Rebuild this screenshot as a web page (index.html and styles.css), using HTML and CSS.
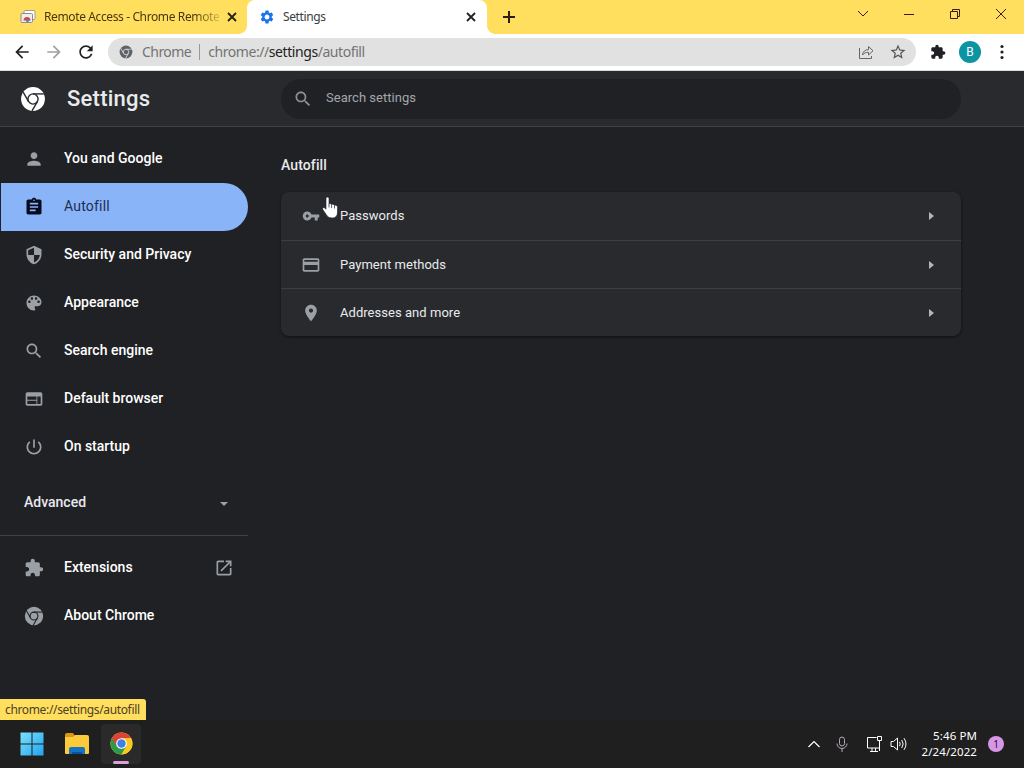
FILE: index.html
```html
<!DOCTYPE html>
<html lang="en">
<head>
    <meta charset="UTF-8">
    <title>Settings</title>
    <meta name="viewport" content="width=device-width, initial-scale=1.0">
    <link rel="stylesheet" href="styles.css">
</head>
<body>
<svg class="defs">
    <symbol id="i-chrome" viewBox="0 0 24 24">
        <circle cx="12" cy="12" r="11" fill="currentColor"/>
        <g fill="none" stroke="var(--cut)" stroke-width="1.3">
            <circle cx="12" cy="12" r="4.7"/>
            <path d="M12 7.3h10"/>
            <path d="M12 7.3h10" transform="rotate(120 12 12)"/>
            <path d="M12 7.3h10" transform="rotate(240 12 12)"/>
        </g>
    </symbol>
    <symbol id="i-search" viewBox="0 0 24 24"><path d="M15.5 14h-.79l-.28-.27C15.41 12.59 16 11.11 16 9.5 16 5.91 13.09 3 9.5 3S3 5.91 3 9.5 5.91 16 9.5 16c1.61 0 3.09-.59 4.23-1.57l.27.28v.79l5 4.99L20.49 19l-4.99-5zm-6 0C7.01 14 5 11.99 5 9.5S7.01 5 9.5 5 14 7.01 14 9.5 11.99 14 9.5 14z"/></symbol>
    <symbol id="i-ext" viewBox="0 0 24 24"><path d="M20.5 11H19V7c0-1.1-.9-2-2-2h-4V3.5C13 2.12 11.88 1 10.5 1S8 2.12 8 3.5V5H4c-1.1 0-1.99.9-1.99 2v3.8H3.5c1.49 0 2.7 1.21 2.7 2.7s-1.21 2.7-2.7 2.7H2V20c0 1.1.9 2 2 2h3.8v-1.5c0-1.49 1.21-2.7 2.7-2.7 1.49 0 2.7 1.21 2.7 2.7V22H17c1.1 0 2-.9 2-2v-4h1.5c1.38 0 2.5-1.12 2.5-2.5S21.88 11 20.5 11z"/></symbol>
    <symbol id="i-back" viewBox="0 0 24 24"><path d="M20 11H7.83l5.59-5.59L12 4l-8 8 8 8 1.41-1.41L7.83 13H20v-2z"/></symbol>
    <symbol id="i-close" viewBox="0 0 10 10"><path d="M1 1l8 8M9 1l-8 8" fill="none" stroke="currentColor" stroke-width="1.8"/></symbol>
</svg>

<div class="tabstrip">
    <div class="tab">
        <svg class="favicon" viewBox="0 0 16 16">
            <rect x="4" y="1.5" width="11" height="9" rx="1" fill="#fff" stroke="#a79a8c"/>
            <rect x="1" y="4.5" width="11.5" height="9" rx="1" fill="#eee" stroke="#8d8b90"/>
            <path d="M3.5 11.500a3.500 3.500 0 0 1 7 0z" fill="#d8453a"/>
            <circle cx="7.5" cy="11.5" r="1.6" fill="#4a80d8"/>
        </svg>
        <span class="tab-title faded">Remote Access - Chrome Remote</span>
        <svg class="tab-close"><use href="#i-close"/></svg>
    </div>
    <div class="tab active">
        <svg class="favicon gear" viewBox="0 0 24 24"><path d="M19.14 12.94c.04-.3.06-.61.06-.94 0-.32-.02-.64-.07-.94l2.03-1.58c.18-.14.23-.41.12-.61l-1.92-3.32c-.12-.22-.37-.29-.59-.22l-2.39.96c-.5-.38-1.03-.7-1.62-.94l-.36-2.54c-.04-.24-.24-.41-.48-.41h-3.84c-.24 0-.43.17-.47.41l-.36 2.54c-.59.24-1.13.57-1.62.94l-2.39-.96c-.22-.08-.47 0-.59.22L2.74 8.87c-.12.21-.08.47.12.61l2.03 1.58c-.05.3-.09.63-.09.94s.02.64.07.94l-2.03 1.58c-.18.14-.23.41-.12.61l1.92 3.32c.12.22.37.29.59.22l2.39-.96c.5.38 1.03.7 1.62.94l.36 2.54c.05.24.24.41.48.41h3.84c.24 0 .44-.17.47-.41l.36-2.54c.59-.24 1.13-.56 1.62-.94l2.39.96c.22.08.47 0 .59-.22l1.92-3.32c.12-.22.07-.47-.12-.61l-2.01-1.58zM12 15.6c-1.98 0-3.6-1.62-3.6-3.6s1.62-3.6 3.6-3.6 3.6 1.62 3.6 3.6-1.62 3.6-3.6 3.6z"/></svg>
        <span class="tab-title">Settings</span>
        <svg class="tab-close"><use href="#i-close"/></svg>
    </div>
    <svg class="new-tab" viewBox="0 0 12 12"><path d="M6 0v12M0 6h12"/></svg>
    <div class="window-buttons">
        <svg viewBox="0 0 12 12"><path d="M1 3l5 5 5-5"/></svg>
        <svg viewBox="0 0 12 12"><path d="M1 6.5h10"/></svg>
        <svg viewBox="0 0 12 12"><path d="M1.5 3.5h7v7h-7zM3.5 3.5v-2h7v7h-2"/></svg>
        <svg viewBox="0 0 12 12"><path d="M1 1l10 10M11 1L1 11"/></svg>
    </div>
</div>

<div class="toolbar">
    <svg class="nav"><use href="#i-back"/></svg>
    <svg class="nav forward"><use href="#i-back"/></svg>
    <svg class="nav" viewBox="0 0 24 24"><path d="M17.65 6.35C16.2 4.9 14.21 4 12 4c-4.42 0-7.99 3.58-7.99 8s3.57 8 7.99 8c3.73 0 6.84-2.55 7.73-6h-2.08c-.82 2.33-3.04 4-5.65 4-3.31 0-6-2.69-6-6s2.69-6 6-6c1.66 0 3.14.69 4.22 1.78L13 11h7V4l-2.35 2.35z"/></svg>
    <div class="omnibox">
        <svg class="site-icon"><use href="#i-chrome"/></svg>
        <span class="scheme">Chrome</span>
        <span class="divider"></span>
        <span class="url">chrome://<b>settings</b>/autofill</span>
        <svg class="share" viewBox="0 0 16 16"><path d="M1.5 4v10.5h12V12M4.5 11c.3-3.5 2.5-5.3 6-5.3V2.500L15 6.800l-4.500 4.200V8.300c-2.700 0-4.500.7-6 2.700z"/></svg>
        <svg class="star" viewBox="0 0 24 24"><path d="M22 9.24l-7.19-.62L12 2 9.19 8.63 2 9.24l5.46 4.73L5.82 21 12 17.27 18.18 21l-1.63-7.03L22 9.24zM12 15.4l-3.76 2.27 1-4.28-3.32-2.88 4.38-.38L12 6.1l1.71 4.04 4.38.38-3.32 2.88 1 4.28L12 15.4z"/></svg>
    </div>
    <svg class="puzzle"><use href="#i-ext"/></svg>
    <span class="avatar">B</span>
    <svg class="kebab" viewBox="0 0 4 16"><circle cx="2" cy="2.5" r="1.6"/><circle cx="2" cy="8" r="1.6"/><circle cx="2" cy="13.5" r="1.6"/></svg>
</div>

<div class="settings">
    <header>
        <svg class="logo"><use href="#i-chrome"/></svg>
        <h1>Settings</h1>
        <div class="search">
            <svg><use href="#i-search"/></svg>
            <span>Search settings</span>
        </div>
    </header>
    <div class="content">
        <nav>
            <a class="item">
                <svg viewBox="0 0 24 24"><path d="M12 12c2.21 0 4-1.79 4-4s-1.79-4-4-4-4 1.79-4 4 1.79 4 4 4zm0 2c-2.67 0-8 1.34-8 4v2h16v-2c0-2.66-5.33-4-8-4z"/></svg>
                You and Google
            </a>
            <a class="item selected">
                <svg viewBox="0 0 24 24"><path d="M19 3h-4.18C14.4 1.84 13.3 1 12 1c-1.3 0-2.4.84-2.82 2H5c-1.1 0-2 .9-2 2v14c0 1.1.9 2 2 2h14c1.1 0 2-.9 2-2V5c0-1.1-.9-2-2-2zm-7 0c.55 0 1 .45 1 1s-.45 1-1 1-1-.45-1-1 .45-1 1-1zm2 14H7v-2h7v2zm3-4H7v-2h10v2zm0-4H7V7h10v2z"/></svg>
                Autofill
            </a>
            <a class="item">
                <svg viewBox="0 0 24 24"><path d="M12 1L3 5v6c0 5.55 3.84 10.74 9 12 5.16-1.26 9-6.45 9-12V5l-9-4zm0 10.99h7c-.53 4.12-3.28 7.79-7 8.94V12H5V6.3l7-3.11v8.8z"/></svg>
                Security and Privacy
            </a>
            <a class="item">
                <svg viewBox="0 0 24 24"><path d="M12 3c-4.97 0-9 4.03-9 9s4.03 9 9 9c.83 0 1.5-.67 1.5-1.5 0-.39-.15-.74-.39-1.01-.23-.26-.38-.61-.38-.99 0-.83.67-1.5 1.5-1.5H16c2.76 0 5-2.24 5-5 0-4.42-4.03-8-9-8zm-5.5 9c-.83 0-1.5-.67-1.5-1.5S5.67 9 6.5 9 8 9.67 8 10.5 7.33 12 6.5 12zm3-4C8.67 8 8 7.33 8 6.5S8.67 5 9.5 5s1.5.67 1.5 1.5S10.33 8 9.5 8zm5 0c-.83 0-1.5-.67-1.5-1.5S13.67 5 14.5 5s1.5.67 1.5 1.5S15.33 8 14.5 8zm3 4c-.83 0-1.5-.67-1.5-1.5S16.67 9 17.5 9s1.5.67 1.5 1.5-.67 1.5-1.5 1.5z"/></svg>
                Appearance
            </a>
            <a class="item">
                <svg><use href="#i-search"/></svg>
                Search engine
            </a>
            <a class="item">
                <svg viewBox="0 0 24 24"><path d="M20 4H4c-1.1 0-1.99.9-1.99 2L2 18c0 1.1.9 2 2 2h16c1.1 0 2-.9 2-2V6c0-1.1-.9-2-2-2zm-5 14H4v-4h11v4zm0-5H4V9h11v4zm5 5h-4V9h4v9z"/></svg>
                Default browser
            </a>
            <a class="item">
                <svg viewBox="0 0 24 24"><path d="M13 3h-2v10h2V3zm4.83 2.17l-1.42 1.42C17.99 7.86 19 9.81 19 12c0 3.87-3.13 7-7 7s-7-3.13-7-7c0-2.19 1.01-4.14 2.58-5.42L6.17 5.17C4.23 6.82 3 9.26 3 12c0 4.97 4.03 9 9 9s9-4.03 9-9c0-2.74-1.23-5.18-3.17-6.83z"/></svg>
                On startup
            </a>
            <div class="advanced">Advanced <span class="caret"></span></div>
            <a class="item">
                <svg><use href="#i-ext"/></svg>
                Extensions
                <svg class="launch" viewBox="0 0 24 24"><path d="M19 19H5V5h7V3H5c-1.11 0-2 .9-2 2v14c0 1.1.89 2 2 2h14c1.1 0 2-.9 2-2v-7h-2v7zM14 3v2h3.59l-9.83 9.83 1.41 1.41L19 6.41V10h2V3h-7z"/></svg>
            </a>
            <a class="item">
                <svg><use href="#i-chrome"/></svg>
                About Chrome
            </a>
        </nav>
        <main>
            <h2>Autofill</h2>
            <div class="card">
                <div class="row">
                    <svg class="key" viewBox="0 0 24 24"><path d="M12.65 10C11.83 7.67 9.61 6 7 6c-3.31 0-6 2.69-6 6s2.69 6 6 6c2.61 0 4.83-1.67 5.65-4H17v4h4v-4h2v-4H12.65zM7 14c-1.1 0-2-.9-2-2s.9-2 2-2 2 .9 2 2-.9 2-2 2z"/></svg>
                    Passwords <span class="arrow"></span>
                </div>
                <div class="row">
                    <svg viewBox="0 0 24 24"><path d="M20 4H4c-1.11 0-1.99.89-1.99 2L2 18c0 1.11.89 2 2 2h16c1.11 0 2-.89 2-2V6c0-1.11-.89-2-2-2zm0 14H4v-6h16v6zm0-10H4V6h16v2z"/></svg>
                    Payment methods <span class="arrow"></span>
                </div>
                <div class="row">
                    <svg viewBox="0 0 24 24"><path d="M12 2C8.13 2 5 5.13 5 9c0 5.25 7 13 7 13s7-7.75 7-13c0-3.87-3.13-7-7-7zm0 9.5c-1.38 0-2.5-1.12-2.5-2.5s1.12-2.5 2.5-2.5 2.5 1.12 2.5 2.5-1.12 2.5-2.5 2.5z"/></svg>
                    Addresses and more <span class="arrow"></span>
                </div>
            </div>
        </main>
    </div>
    <div class="status-bubble">chrome://settings/autofill</div>
</div>

<div class="taskbar">
    <svg class="start" viewBox="0 0 24 24">
        <defs><linearGradient id="win" x1="0" y1="0" x2="1" y2="1"><stop offset="0" stop-color="#7be0fb"/><stop offset="1" stop-color="#20a4ee"/></linearGradient></defs>
        <path fill="url(#win)" d="M.5.5h11v11H.5zM12.5.5h11v11h-11zM.5 12.5h11v11H.5zM12.5 12.5h11v11h-11z"/>
    </svg>
    <svg class="explorer" viewBox="0 0 26 24">
        <path d="M1 3q0-2 2-2h6l2 3v4H1z" fill="#d9980f"/>
        <path d="M1 5h8l2-2h12q2 0 2 2v16q0 1-1 1H2q-1 0-1-1z" fill="#fccb3c"/>
        <path d="M5 22v-5q0-2 2-2h12q2 0 2 2v5z" fill="#1573c4"/>
        <path d="M8 22v-2h10v2z" fill="#0d5296"/>
    </svg>
    <div class="app-active">
        <svg viewBox="0 0 24 24">
            <circle cx="12" cy="12" r="11.5" fill="#fbc924"/>
            <path d="M12 12L2 6.3A11.5 11.5 0 0 0 12 23.5l5-8.6z" fill="#2c9a4b"/>
            <path d="M2 6.3A11.5 11.5 0 0 1 22 6.3l-10 .2V12l-5 2.5z" fill="#dc4437"/>
            <path d="M12 6.5h10a11.5 11.5 0 0 1-10 17l5-8.5z" fill="#fbc924"/>
            <circle cx="12" cy="12" r="5.6" fill="#fff"/>
            <circle cx="12" cy="12" r="4.4" fill="#3f7fe8"/>
        </svg>
    </div>
    <div class="tray">
        <svg class="chevron" viewBox="0 0 12 12"><path d="M.5 9L6 3.5 11.5 9"/></svg>
        <svg class="mic" viewBox="0 0 12 16"><rect x="3.5" y="1" width="5" height="9" rx="2.5"/><path d="M1 7.5a5 5 0 0 0 10 0M6 12.5V16"/></svg>
        <svg class="network" viewBox="0 0 17 16"><path d="M10.5 1.5h-9V12h12V8M4 15.5h8M6 12v3M9.5 12v3M11.5.5h4v4h-4zM13.5 4.5V15"/></svg>
        <svg class="volume" viewBox="0 0 17 16"><path d="M1 5.5h2.5L7.5 2v12l-4-3.5H1zM9.500 5.8q1.5 2.2 0 4.4M11.7 4q3 4 0 8M14 2.2q4 5.8 0 11.6"/></svg>
        <div class="clock">5:46 PM<br>2/24/2022</div>
        <span class="badge">1</span>
    </div>
</div>

<svg class="cursor" viewBox="0 0 17 23"><path d="M5.5 1Q7 1 7 2.5V8l1-.5q1.2 0 1.5 1.3.5-.8 1.500-.6 1.200.2 1.500 1.300.5-.5 1.500-.3 1.500.5 1.500 2V16q0 6-5.500 6-4 0-5.500-3L.8 13.500q-.6-1.500.6-1.900 1-.2 2.600 1.600V2.500Q4 1 5.500 1z"/><path class="fingers" d="M7 8v3.5M9.6 9v3M12.5 9.5v3"/></svg>
</body>
</html>
```
FILE: styles.css
```css
* { box-sizing: border-box; }
body { margin: 0; width: 1024px; height: 768px; overflow: hidden; background: #202124; font-family: Roboto, Arial, sans-serif; position: relative; }
svg { display: block; flex: none; fill: currentColor; }
.defs { position: absolute; width: 0; height: 0; }

/* Tab strip */
.tabstrip { display: flex; align-items: center; height: 34px; background: #ffdf5d; color: #4a3712; font: 12px "Noto Sans", sans-serif; }
.tab { display: flex; align-items: center; width: 247px; height: 34px; padding: 0 10px 0 20px; }
.tab.active { width: 240px; padding: 0 11px 0 12px; background: #fff; border-radius: 8px 8px 0 0; color: #3c3c3c; position: relative; }
.tab.active::before, .tab.active::after { content: ""; position: absolute; bottom: 0; width: 8px; height: 8px; }
.tab.active::before { left: -8px; background: radial-gradient(circle at 0 0, transparent 7.5px, #fff 8px); }
.tab.active::after { right: -8px; background: radial-gradient(circle at 100% 0, transparent 7.5px, #fff 8px); }
.favicon { width: 16px; height: 16px; margin-right: 8px; }
.gear { color: #1a73e8; }
.tab-title { flex: 1; white-space: nowrap; letter-spacing: -0.38px; padding-bottom: 1px; }
.faded { -webkit-mask-image: linear-gradient(90deg, #000 150px, transparent 182px); mask-image: linear-gradient(90deg, #000 150px, transparent 182px); }
.tab-close { width: 10px; height: 10px; color: #222; margin-left: 8px; }
.new-tab { width: 12px; height: 12px; margin-left: 16px; stroke: #2b1a10; stroke-width: 2; }
.window-buttons { display: flex; gap: 34px; margin-left: auto; margin-right: 17px; margin-bottom: 6px; }
.window-buttons svg { width: 12px; height: 12px; fill: none; stroke: #3a1c14; }

/* Toolbar */
.toolbar { display: flex; align-items: center; height: 37px; padding: 0 0 1px 12px; background: #fff; color: #202124; border-bottom: 1px solid #dadce0; }
.nav { width: 20px; height: 20px; margin-right: 12px; }
.forward { color: #a0a0a0; transform: scaleX(-1); }
.omnibox { display: flex; align-items: center; width: 808px; height: 28px; padding: 0 9px 0 11px; border-radius: 14px; background: #e1e1e1; color: #737373; font: 14px "Noto Sans", sans-serif; }
.site-icon { width: 14px; height: 14px; margin-right: 9px; color: #5f6368; --cut: #e1e1e1; }
.scheme { letter-spacing: -0.55px; }
.divider { width: 1px; height: 16px; margin: 0 8px; background: #999; }
.url { letter-spacing: -0.43px; }
.url b { font-weight: 400; color: #222; }
.share { width: 16px; height: 16px; margin-left: auto; margin-right: 15px; fill: none; stroke: #666; }
.star { width: 18px; height: 18px; color: #555; }
.puzzle { width: 16px; height: 16px; margin-left: 14px; }
.avatar { width: 22px; height: 22px; margin-left: 13px; border-radius: 50%; background: #0c94a3; color: #fff; font-size: 12px; line-height: 22px; text-align: center; }
.kebab { width: 4px; height: 16px; margin-left: 19px; }

/* Settings page */
.settings { position: relative; height: 649px; color: #e8eaed; }
header { display: flex; align-items: center; height: 56px; padding-left: 20px; background: #292a2d; border-bottom: 1px solid #3f4042; }
.logo { width: 26px; height: 26px; color: #fff; --cut: #292a2d; }
h1 { width: 214px; margin: 0 0 0 21px; font-size: 22px; font-weight: 500; line-height: 26px; letter-spacing: 0.25px; }
.search { display: flex; align-items: center; width: 680px; height: 40px; padding: 0 12px; border-radius: 20px; background: #202124; color: #a3a7ac; font-size: 13px; letter-spacing: 0.03px; }
.search svg { width: 20px; height: 20px; margin-right: 13px; color: #8d9196; }
.search span { padding-bottom: 2px; }
.content { display: flex; }
nav { width: 281px; padding-top: 8px; }
.item { display: flex; align-items: center; width: 248px; height: 48px; padding-left: 24px; padding-bottom: 2px; font-size: 14px; font-weight: 500; color: #fff; --cut: #202124; }
.item svg { width: 20px; height: 20px; margin: 2px 20px 0 0; color: #9aa0a6; }
.item.selected { margin-left: 1px; width: 247px; padding-left: 23px; border-radius: 0 24px 24px 0; background: #8ab4f8; color: #1c2e52; font-weight: 400; letter-spacing: 0.2px; }
.item.selected svg { color: #050a1e; }
.item .launch { margin-left: auto; margin-right: 14px; }
.advanced { display: flex; align-items: center; justify-content: space-between; width: 248px; height: 65px; margin-bottom: 8px; padding: 0 20px 2px 24px; border-bottom: 1px solid #3f4042; font-size: 14px; font-weight: 500; }
.caret { margin-top: 3px; border: 4px solid transparent; border-top-color: #9aa0a6; border-bottom: 0; }
main { width: 680px; }
h2 { margin: 29px 0 18px; font-size: 14px; font-weight: 500; line-height: 18px; letter-spacing: 0.1px; }
.card { border-radius: 8px; background: #292a2d; box-shadow: 0 1px 3px #0008; overflow: hidden; }
.row { display: flex; align-items: center; height: 48px; padding: 0 27px 1px 20px; font-size: 13px; letter-spacing: 0.04px; }
.row + .row { border-top: 1px solid #3d3e41; }
.row svg { width: 20px; height: 20px; margin-right: 19px; color: #9aa0a6; }
.row + .row svg, .row + .row .arrow { margin-top: 2px; }
.row .key { width: 18px; height: 18px; margin: 0 20px 0 1px; }
.arrow { margin-left: auto; border: 4px solid transparent; border-left: 5px solid #b3b6ba; border-right: 0; }
.status-bubble { position: absolute; left: 0; bottom: 0; width: 146px; height: 21px; padding-left: 5px; border-radius: 0 3px 0 0; background: #ffdf5d; color: #4d4026; font: 12px/21px "Noto Sans", sans-serif; letter-spacing: -0.35px; white-space: nowrap; }

/* Taskbar */
.taskbar { display: flex; align-items: center; height: 48px; padding-left: 20px; background: #1f1f1f; color: #fff; }
.start { width: 24px; height: 24px; }
.explorer { width: 26px; height: 24px; margin-left: 20px; }
.app-active { display: flex; flex-direction: column; align-items: center; justify-content: space-between; width: 40px; height: 40px; margin-left: 11px; padding: 8px 0 0; border-radius: 4px; background: #2a2a2a; }
.app-active svg { width: 23px; height: 23px; }
.app-active::after { content: ""; width: 16px; height: 3px; border-radius: 2px; background: #d9a0dc; }
.tray { display: flex; align-items: center; margin-left: auto; margin-right: 20px; }
.tray svg { fill: none; stroke: #fff; }
.chevron { width: 12px; height: 12px; margin-right: 16px; stroke-width: 1.2; }
.tray .mic { width: 12px; height: 16px; margin-right: 18px; stroke: #b8a9ba; }
.network { width: 17px; height: 16px; margin-right: 7px; }
.volume { width: 17px; height: 16px; margin-right: 14px; }
.clock { width: 56px; font: 11.5px/16px "Noto Sans", sans-serif; letter-spacing: 0.1px; text-align: right; white-space: nowrap; }
.badge { width: 16px; height: 16px; margin-left: 11px; border-radius: 50%; background: #d796e6; color: #2a1030; font: 10px/16px "Noto Sans", sans-serif; text-align: center; }

/* Mouse pointer */
.cursor { position: absolute; left: 322px; top: 196px; width: 17px; height: 23px; fill: #fff; stroke: #222; stroke-width: .6; }
.fingers { fill: none; stroke: #333; stroke-width: .8; }
```
